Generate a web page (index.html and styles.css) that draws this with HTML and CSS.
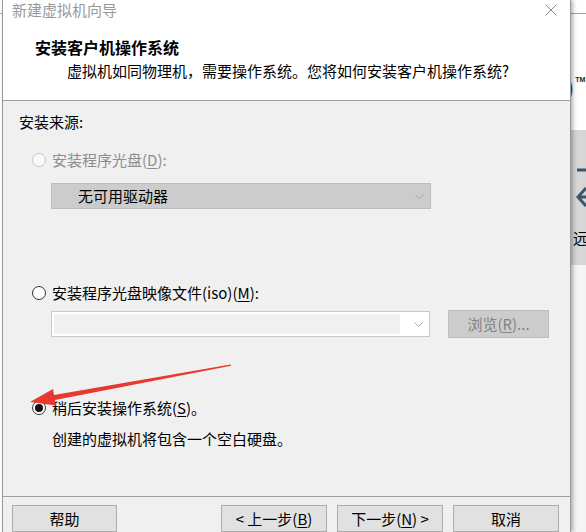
FILE: index.html
```html
<!DOCTYPE html>
<html lang="zh-CN">
<head>
    <meta charset="UTF-8">
    <meta name="viewport" content="width=device-width, initial-scale=1.0"/>
    <title>新建虚拟机向导</title>
    <link rel="stylesheet" href="styles.css">
</head>
<body>
<div class="screen">
    <div class="edge-left"></div>
    <div class="wizard">
        <div class="header">
            <div class="titlebar">
                <span class="title">新建虚拟机向导</span>
                <svg class="close" width="12" height="12" viewBox="0 0 12 12">
                    <path d="M0.5 0.5 L11.5 11.5 M11.5 0.5 L0.5 11.5" stroke="#8c8c8c" stroke-width="1" fill="none"/>
                </svg>
            </div>
            <h1>安装客户机操作系统</h1>
            <p class="subtitle">虚拟机如同物理机，需要操作系统。您将如何安装客户机操作系统?</p>
        </div>
        <div class="content">
            <div class="group-label">安装来源:</div>
            <div class="option option-disc disabled">
                <span class="radio"></span>
                <span>安装程序光盘(<u>D</u>):</span>
            </div>
            <div class="select">
                <span class="select-text">无可用驱动器</span>
                <svg class="chevron" width="9" height="5" viewBox="0 0 9 5">
                    <polyline points="0.5,0.5 4.5,4.5 8.5,0.5" stroke="#a6a6a6" fill="none"/>
                </svg>
            </div>
            <div class="option option-iso">
                <span class="radio"></span>
                <span>安装程序光盘映像文件(iso)(<u>M</u>):</span>
            </div>
            <div class="iso-row">
                <div class="combo">
                    <div class="combo-field"></div>
                    <svg class="chevron" width="9" height="5" viewBox="0 0 9 5">
                        <polyline points="0.5,0.5 4.5,4.5 8.5,0.5" stroke="#a6a6a6" fill="none"/>
                    </svg>
                </div>
                <button class="browse" disabled>浏览(<u>R</u>)...</button>
            </div>
            <div class="option option-later">
                <span class="radio checked"></span>
                <span>稍后安装操作系统(<u>S</u>)。</span>
            </div>
            <p class="note">创建的虚拟机将包含一个空白硬盘。</p>
        </div>
        <div class="footer">
            <button class="btn btn-help">帮助</button>
            <span class="spacer"></span>
            <button class="btn">&lt; 上一步(<u>B</u>)</button>
            <button class="btn">下一步(<u>N</u>) &gt;</button>
            <button class="btn">取消</button>
        </div>
    </div>
    <div class="edge-right">
        <div class="behind-top">
            <div class="tabline"></div>
            <div class="logo"><span class="paren">)</span><span class="tm">TM</span></div>
        </div>
        <div class="behind-panel">
            <svg class="back-icon" width="15" height="52" viewBox="0 0 15 52">
                <path d="M6 10 H15 M15 28 L7 37 L15 46 M7 37 H15" stroke="#3f5567" stroke-width="3" fill="none"/>
            </svg>
            <div class="behind-text">远</div>
        </div>
        <div class="behind-bottom"></div>
    </div>
</div>
<svg class="annotation" width="586" height="532" viewBox="0 0 586 532">
    <polygon points="30,402 56,405.5 55,400 231,365.8 230.6,364.4 54,395 53,389" fill="#e8392e"/>
</svg>
</body>
</html>
```

FILE: styles.css
```css
body {
    margin: 0;
    font-family: "Noto Sans CJK SC", "Noto Sans", sans-serif;
    font-size: 15px;
    color: #000;
}
.screen {
    display: flex;
    width: 586px;
    height: 532px;
    overflow: hidden;
    background: #fff;
}
.edge-left {
    width: 2px;
    flex: none;
    background: linear-gradient(to bottom, #fff 13px, #8fa9c6 13px, #8fa9c6 14px, #fff 14px);
}
.wizard {
    width: 569px;
    flex: none;
    box-sizing: border-box;
    border-left: 1px solid #9a9a9a;
    border-right: 1px solid #9a9a9a;
    background: #f0f0f0;
    box-shadow: 2px 0 4px rgba(0, 0, 0, 0.3);
    position: relative;
    z-index: 1;
}
.header {
    height: 100px;
    background: #fff;
    border-bottom: 1px solid #a0a0a0;
}
.titlebar {
    display: flex;
    justify-content: space-between;
    align-items: center;
    height: 20px;
    padding: 0 13px 0 9px;
}
.title {
    color: #999;
    line-height: 20px;
}
.close {
    margin-top: -1px;
}
h1 {
    margin: 17px 0 0 32px;
    font-size: 16px;
    font-weight: bold;
    line-height: 20px;
}
.subtitle {
    margin: 4px 0 0 64px;
    line-height: 20px;
}
.content {
    height: 395px;
    box-sizing: border-box;
    padding: 0 16px;
    overflow: hidden;
}
.group-label {
    margin-top: 11px;
    line-height: 20px;
}
.option {
    display: flex;
    align-items: center;
    height: 20px;
    line-height: 20px;
}
.option.disabled {
    color: #8d8d8d;
}
.option-disc {
    margin-top: 18px;
}
.option-iso {
    margin-top: 74px;
}
.option-later {
    margin-top: 60px;
}
.radio {
    width: 14px;
    height: 14px;
    box-sizing: border-box;
    margin: 0 6px 0 13px;
    border: 1px solid #333;
    border-radius: 50%;
    background: #fff;
    display: flex;
    justify-content: center;
    align-items: center;
}
.disabled .radio {
    border-color: #c4c4c4;
    background: #f9f9f9;
}
.radio.checked::after {
    content: "";
    width: 8px;
    height: 8px;
    border-radius: 50%;
    background: #111;
}
u {
    text-underline-offset: 2px;
}
.select {
    display: flex;
    align-items: center;
    justify-content: space-between;
    width: 380px;
    height: 26px;
    box-sizing: border-box;
    margin: 13px 0 0 32px;
    padding: 0 6px 0 26px;
    background: #cccccc;
    border: 1px solid #bdbdbd;
}
.select-text {
    line-height: 20px;
}
.iso-row {
    display: flex;
    align-items: center;
    height: 28px;
    margin-top: 7px;
}
.combo {
    display: flex;
    align-items: center;
    width: 379px;
    height: 26px;
    box-sizing: border-box;
    margin-left: 32px;
    padding: 2px 6px 2px 2px;
    background: #fff;
    border: 1px solid #c9c9c9;
}
.combo-field {
    flex: 1;
    height: 100%;
    margin-right: 14px;
    background: #f0f0f0;
}
.browse {
    width: 101px;
    height: 28px;
    margin-left: 18px;
    padding: 0;
    font: inherit;
    line-height: 20px;
    color: #838383;
    background: #cccccc;
    border: 1px solid #bfbfbf;
}
.note {
    margin: 11px 0 0 33px;
    line-height: 20px;
}
.footer {
    display: flex;
    align-items: flex-start;
    border-top: 1px solid #a0a0a0;
    padding: 8px 11px 0 9px;
    gap: 10px;
}
.spacer {
    flex: 1;
}
.btn {
    width: 106px;
    height: 27px;
    padding: 0;
    font: inherit;
    line-height: 20px;
    color: #000;
    background: #e1e1e1;
    border: 1px solid #adadad;
}
.btn-help {
    width: 105px;
}
.edge-right {
    width: 15px;
    flex: none;
    display: flex;
    flex-direction: column;
    overflow: hidden;
}
.behind-top {
    height: 130px;
    background: #fff;
    overflow: hidden;
}
.tabline {
    height: 1px;
    margin-top: 13px;
    background: #8fa9c6;
}
.logo {
    display: flex;
    align-items: flex-start;
    margin-top: 62px;
    white-space: nowrap;
}
.paren {
    font-family: "Liberation Sans", sans-serif;
    font-weight: bold;
    font-size: 22px;
    line-height: 24px;
    color: #1d4f9c;
    margin-left: -5px;
}
.tm {
    font-family: "Liberation Sans", sans-serif;
    font-weight: bold;
    font-size: 7px;
    line-height: 8px;
    margin-left: 2px;
    color: #222;
}
.behind-panel {
    height: 135px;
    background: #d6d6d6;
    overflow: hidden;
}
.back-icon {
    display: block;
    margin-top: 30px;
}
.behind-text {
    margin: 16px 0 0 2px;
    line-height: 20px;
    white-space: nowrap;
}
.behind-bottom {
    flex: 1;
    background: #f4f4f4;
}
.annotation {
    position: absolute;
    top: 0;
    left: 0;
    z-index: 2;
    pointer-events: none;
}
```
